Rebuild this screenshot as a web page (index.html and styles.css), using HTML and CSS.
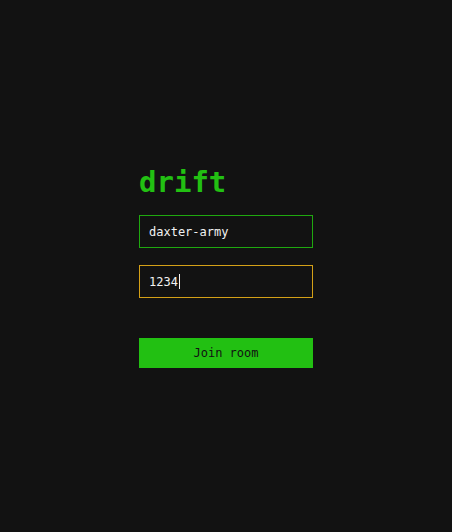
FILE: index.html
```html
<!DOCTYPE html>
<html>
<head>
<meta charset="utf-8">
<link rel="stylesheet" href="styles.css">
</head>
<body>
<main class="page">
  <form class="login">
    <h1 class="title">drift</h1>
    <input class="field field-name" type="text" value="daxter-army">
    <div class="field field-room"><span>1234</span><span class="caret"></span></div>
    <button class="join" type="button">Join room</button>
  </form>
</main>
</body>
</html>
```
FILE: styles.css
```css
html, body {
  margin: 0;
  padding: 0;
  background: #121212;
  height: 100%;
}
body {
  font-family: "DejaVu Sans Mono", monospace;
}
.page {
  display: flex;
  justify-content: center;
  padding-top: 162px;
  height: 100%;
  box-sizing: border-box;
}
.login {
  width: 174px;
  display: flex;
  flex-direction: column;
}
.title {
  margin: 0;
  font-size: 29px;
  font-weight: bold;
  color: #22c012;
  line-height: 40px;
  height: 53px;
}
.field {
  box-sizing: border-box;
  width: 174px;
  height: 33px;
  background: #121212;
  border: 1px solid #1fa80f;
  color: #f2f2f2;
  font-family: "DejaVu Sans Mono", monospace;
  font-size: 12px;
  padding: 0 9px;
  margin: 0;
  outline: none;
  display: flex;
  align-items: center;
}
.field-room {
  margin-top: 17px;
  border-color: #d4a017;
}
.caret {
  display: inline-block;
  width: 1px;
  height: 15px;
  background: #f2f2f2;
  margin-left: 1px;
}
.join {
  margin-top: 40px;
  height: 30px;
  width: 174px;
  border: none;
  background: #22c012;
  color: #121212;
  font-family: "DejaVu Sans Mono", monospace;
  font-size: 12px;
  cursor: pointer;
}
```
